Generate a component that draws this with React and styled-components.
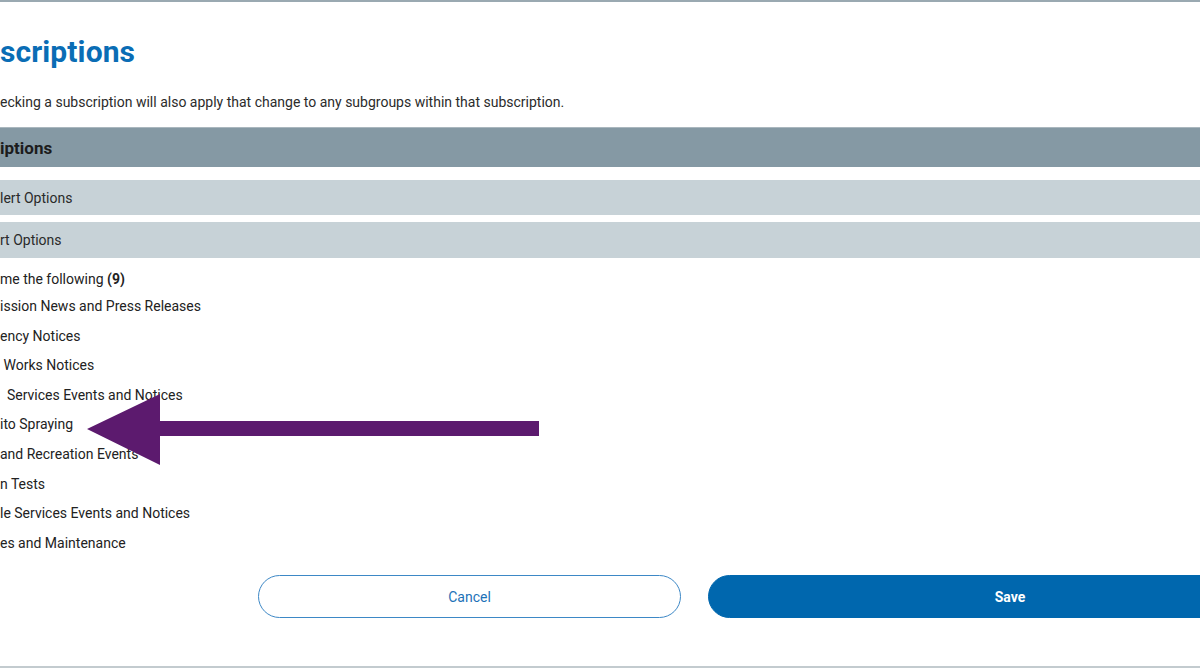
import styled, { createGlobalStyle } from 'styled-components'

const Global = createGlobalStyle`
  html, body {
    margin: 0;
    padding: 0;
    background: #fff;
  }
  body {
    font-family: Roboto, "Liberation Sans", Arial, sans-serif;
    color: #222;
  }
`

const Page = styled.div`
  position: relative;
  width: 1200px;
  height: 671px;
  box-sizing: border-box;
  overflow: hidden;
  border-top: 2px solid #9aa9b1;
  display: flex;
  flex-direction: column;
`

const Title = styled.h1`
  margin: 32px 0 0;
  font-size: 30px;
  line-height: 36px;
  font-weight: 700;
  color: #0a6db5;
  letter-spacing: 0.1px;
`

const Note = styled.p`
  margin: 22px 0 0;
  font-size: 14px;
  line-height: 20px;
  color: #2b2b2b;
`

const GroupBar = styled.div`
  margin-top: 15px;
  height: 40px;
  display: flex;
  align-items: center;
  background: #8599a4;
  border-top: 1px solid #aab7be;
  box-sizing: border-box;
  font-size: 17px;
  font-weight: 700;
  color: #1c1c1c;
`

const OptionBar = styled.div`
  margin-top: ${p => p.$gap}px;
  height: ${p => p.$h}px;
  display: flex;
  align-items: center;
  background: #c7d2d7;
  font-size: 14px;
  color: #2a2a2a;
`

const Lead = styled.div`
  margin-top: 11px;
  height: 20px;
  line-height: 20px;
  font-size: 14px;
  color: #222;

  b {
    font-weight: 700;
  }
`

const List = styled.ul`
  list-style: none;
  margin: 7px 0 0;
  padding: 0;
`

const Item = styled.li`
  height: 29.6px;
  line-height: 20px;
  font-size: 14px;
  color: #222;
  white-space: pre;
`

const Actions = styled.div`
  margin-top: 13px;
  display: flex;
  gap: 27px;
  padding-left: 258px;
`

const Button = styled.button`
  flex: none;
  width: ${p => p.$w}px;
  height: 43px;
  border-radius: 22px;
  font-family: Roboto, "Liberation Sans", Arial, sans-serif;
  font-size: 14px;
  cursor: pointer;
  border: 1px solid ${p => (p.$primary ? '#0067ae' : '#3d88c6')};
  background: ${p => (p.$primary ? '#0067ae' : '#fff')};
  color: ${p => (p.$primary ? '#fff' : '#1d72b8')};
  font-weight: ${p => (p.$primary ? 700 : 400)};
`

const BottomRule = styled.div`
  margin-top: auto;
  margin-bottom: 3px;
  height: 2px;
  background: #c3cbcf;
`

const Arrow = styled.svg`
  position: absolute;
  left: 0;
  top: 0;
  pointer-events: none;
`

const items = [
  'ission News and Press Releases',
  'ency Notices',
  ' Works Notices',
  '  Services Events and Notices',
  'ito Spraying',
  'and Recreation Events',
  'n Tests',
  'le Services Events and Notices',
  'es and Maintenance',
]

export default function App() {
  return (
    <Page>
      <Global />
      <Title>scriptions</Title>
      <Note>ecking a subscription will also apply that change to any subgroups within that subscription.</Note>
      <GroupBar>iptions</GroupBar>
      <OptionBar $gap={13} $h={35}>lert Options</OptionBar>
      <OptionBar $gap={7} $h={36}>rt Options</OptionBar>
      <Lead>
        me the following <b>(9)</b>
      </Lead>
      <List>
        {items.map(t => (
          <Item key={t}>{t}</Item>
        ))}
      </List>
      <Actions>
        <Button $w={423}>Cancel</Button>
        <Button $w={604} $primary>Save</Button>
      </Actions>
      <BottomRule />
      <Arrow width="1200" height="671" viewBox="0 0 1200 671">
        <polygon
          points="87,427 160,392 160,419 539,419 539,434 160,434 160,463"
          fill="#5c1a6e"
        />
      </Arrow>
    </Page>
  )
}
